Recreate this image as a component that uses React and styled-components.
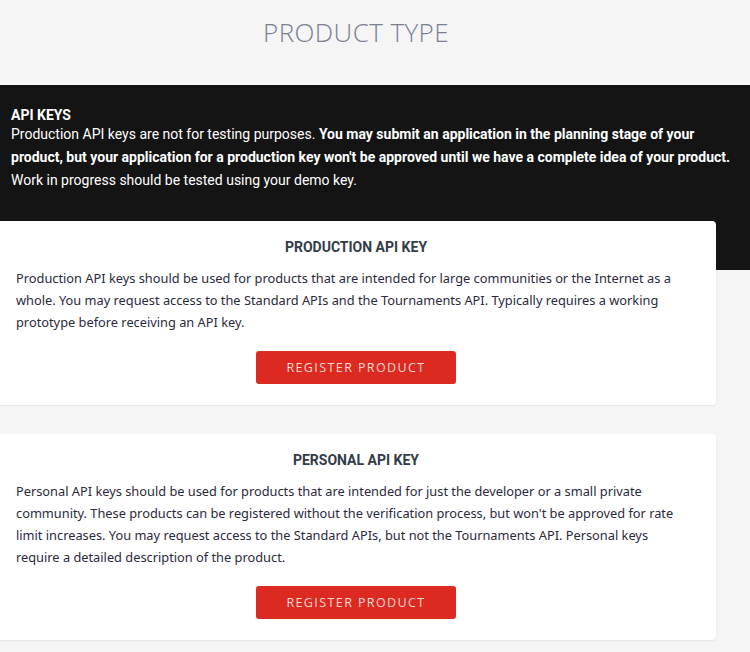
import React from 'react';
import styled, { createGlobalStyle } from 'styled-components';

const GlobalStyle = createGlobalStyle`
    html, body {
        margin: 0;
        padding: 0;
        background: #f5f5f5;
        overflow: hidden;
    }
    * {
        box-sizing: border-box;
    }
`;

const Page = styled.div`
    width: 750px;
    min-height: 652px;
    background: #f5f5f5;
    font-family: 'Noto Sans', 'Open Sans', sans-serif;
`;

const Header = styled.header`
    height: 85px;
    display: flex;
    justify-content: center;
    padding-top: 15px;
    padding-right: 38px;
`;

const Title = styled.h1`
    margin: 0;
    font-family: 'Open Sans', sans-serif;
    font-weight: 300;
    font-size: 26px;
    line-height: 34px;
    letter-spacing: 0.4px;
    color: #7b8090;
    text-transform: uppercase;
`;

const Band = styled.section`
    background: #141414;
    color: #ffffff;
    padding: 22px 10px 78px 11px;
`;

const BandTitle = styled.h2`
    margin: 0;
    font-family: 'Roboto', sans-serif;
    font-weight: 700;
    font-size: 14px;
    line-height: 16px;
    text-transform: uppercase;
`;

const BandText = styled.p`
    margin: 0;
    font-family: 'Roboto', sans-serif;
    font-size: 14px;
    line-height: 23px;

    strong {
        font-weight: 700;
    }
`;

const Cards = styled.div`
    display: flex;
    flex-direction: column;
    gap: 29px;
    margin-top: -49px;
    margin-left: -4px;
    width: 720px;
`;

const Card = styled.article`
    background: #ffffff;
    border-radius: 4px;
    box-shadow: 0 1px 2px rgba(0, 0, 0, 0.08);
    padding: 16px 30px 21px 20px;
    display: flex;
    flex-direction: column;
    align-items: center;
`;

const CardTitle = styled.h3`
    margin: 0 0 0 10px;
    font-family: 'Roboto', sans-serif;
    font-weight: 700;
    font-size: 14px;
    line-height: 20px;
    color: #333c48;
    text-transform: uppercase;
`;

const CardText = styled.p`
    margin: 10px 0 18px 0;
    align-self: stretch;
    font-family: 'Noto Sans', sans-serif;
    font-size: 12.8px;
    line-height: 22px;
    color: #2b2a3c;
`;

const Button = styled.button`
    width: 200px;
    height: 33px;
    margin-left: 10px;
    border: none;
    border-radius: 3px;
    background: #dc2a20;
    color: #f6d6d2;
    font-family: 'Open Sans', sans-serif;
    font-size: 12.5px;
    letter-spacing: 1.4px;
    text-transform: uppercase;
    cursor: pointer;
`;

const keys = [
    {
        title: 'Production API Key',
        text: 'Production API keys should be used for products that are intended for large communities or the Internet as a whole. You may request access to the Standard APIs and the Tournaments API. Typically requires a working prototype before receiving an API key.',
    },
    {
        title: 'Personal API Key',
        text: "Personal API keys should be used for products that are intended for just the developer or a small private community. These products can be registered without the verification process, but won't be approved for rate limit increases. You may request access to the Standard APIs, but not the Tournaments API. Personal keys require a detailed description of the product.",
    },
];

const App = () => (
    <Page>
        <GlobalStyle />
        <Header>
            <Title>Product Type</Title>
        </Header>
        <Band>
            <BandTitle>API Keys</BandTitle>
            <BandText>
                Production API keys are not for testing purposes.{' '}
                <strong>
                    You may submit an application in the planning stage of your product, but your
                    application for a production key won't be approved until we have a complete idea
                    of your product.
                </strong>{' '}
                Work in progress should be tested using your demo key.
            </BandText>
        </Band>
        <Cards>
            {keys.map((key) => (
                <Card key={key.title}>
                    <CardTitle>{key.title}</CardTitle>
                    <CardText>{key.text}</CardText>
                    <Button type="button">Register Product</Button>
                </Card>
            ))}
        </Cards>
    </Page>
);

export default App;
